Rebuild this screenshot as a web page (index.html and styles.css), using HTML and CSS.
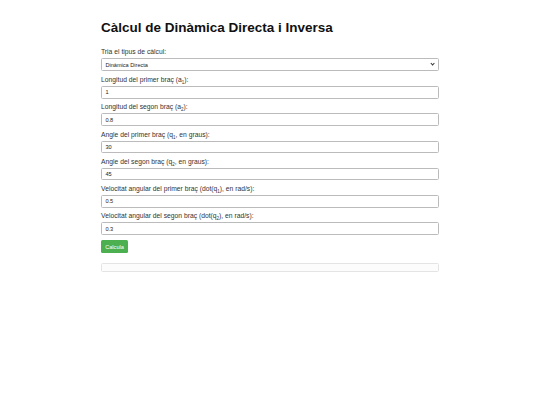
FILE: index.html
```html
<!DOCTYPE html>
<html lang="ca">
<head>
    <meta charset="UTF-8">
    <meta name="viewport" content="width=device-width, initial-scale=1.0">
    <title>Dinàmica Directa i Inversa</title>
    <link rel="stylesheet" href="styles.css">
</head>
<body>
    <div class="container">
        <h1>Càlcul de Dinàmica Directa i Inversa</h1>

        <label for="tipus">Tria el tipus de càlcul:</label>
        <div class="select-wrap">
            <select id="tipus">
                <option value="directa">Dinàmica Directa</option>
                <option value="inversa">Dinàmica Inversa</option>
            </select>
        </div>

        <label for="a1">Longitud del primer braç (a<sub>1</sub>):</label>
        <input id="a1" type="text" value="1">

        <label for="a2">Longitud del segon braç (a<sub>2</sub>):</label>
        <input id="a2" type="text" value="0.8">

        <label for="q1">Angle del primer braç (q<sub>1</sub>, en graus):</label>
        <input id="q1" type="text" value="30">

        <label for="q2">Angle del segon braç (q<sub>2</sub>, en graus):</label>
        <input id="q2" type="text" value="45">

        <label for="dq1">Velocitat angular del primer braç (dot(q<sub>1</sub>), en rad/s):</label>
        <input id="dq1" type="text" value="0.5">

        <label for="dq2">Velocitat angular del segon braç (dot(q<sub>2</sub>), en rad/s):</label>
        <input id="dq2" type="text" value="0.3">

        <button class="calc" type="button">Calcula</button>

        <div class="result" id="result"></div>
    </div>
</body>
</html>
```

FILE: styles.css
```css
body {
    margin: 0;
    font-family: "Liberation Sans", Arial, sans-serif;
    color: #333;
    background-color: #fff;
}

.container {
    width: 338px;
    margin: 0 auto;
    padding-top: 20px;
}

h1 {
    margin: 0 0 12px 0;
    font-size: 13.5px;
    line-height: 16px;
    font-weight: bold;
    color: #111;
}

label {
    display: block;
    font-size: 6.75px;
    line-height: 8px;
    margin-bottom: 2px;
}

sub {
    font-size: 4.5px;
    line-height: 0;
}

input,
select {
    display: block;
    box-sizing: border-box;
    width: 100%;
    height: 12.5px;
    margin: 0 0 4.8px 0;
    padding: 0 3.4px;
    border: 1px solid #bbb;
    border-radius: 1.5px;
    font-family: "Liberation Sans", Arial, sans-serif;
    font-size: 5.6px;
    color: #222;
    background-color: #fff;
}

.select-wrap {
    position: relative;
    margin-bottom: 5px;
}

select {
    -webkit-appearance: none;
    appearance: none;
    height: 13px;
    margin: 0;
}

/* small chevron instead of the native arrow */
.select-wrap::after {
    content: "";
    position: absolute;
    right: 5px;
    top: 4.2px;
    width: 2.2px;
    height: 2.2px;
    border-right: 1.1px solid #333;
    border-bottom: 1.1px solid #333;
    transform: rotate(45deg);
    pointer-events: none;
}

.calc {
    display: block;
    height: 13.5px;
    margin: 0;
    padding: 0 4.2px;
    border: none;
    border-radius: 1.5px;
    background-color: #4caf50;
    color: #fff;
    font-family: "Liberation Sans", Arial, sans-serif;
    font-size: 5.6px;
}

.result {
    box-sizing: border-box;
    height: 9.5px;
    margin-top: 9.5px;
    border: 1px solid #e4e4e4;
    border-radius: 1.5px;
    background-color: #fcfcfc;
}
```
